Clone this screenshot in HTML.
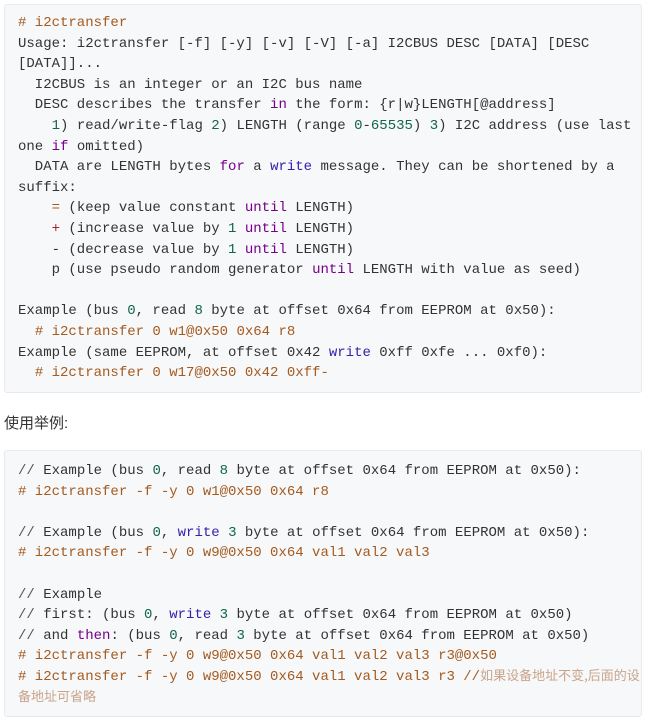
<!DOCTYPE html>
<html><head><meta charset="utf-8"><style>
html,body{margin:0;padding:0;background:#fff;width:648px;height:722px;overflow:hidden}
.blk{position:absolute;left:4px;width:638px;background:#f6f8fa;border:1px solid #e8eaed;border-radius:3px;box-sizing:border-box}
pre{margin:0;font-family:"Liberation Mono","Noto Sans CJK SC",monospace;font-size:14px;line-height:20.6px;color:#333;white-space:pre;padding-left:13px}
.c{color:#a55a1e}
.k{color:#770088}
.n{color:#116644}
.w{color:#3322aa}
.g{color:#555}
.z{color:#c9a48a;font-family:"Noto Sans CJK SC",sans-serif;font-size:13px;line-height:1;vertical-align:baseline}
.lbl{position:absolute;left:4px;top:412px;font-family:"Liberation Sans","Noto Sans CJK SC",sans-serif;font-size:15px;color:#333}
</style></head><body>
<div class="blk" style="top:4px;height:389px;padding-top:8px">
<pre><span class="c"># i2ctransfer</span>
Usage: i2ctransfer [-f] [-y] [-v] [-V] [-a] I2CBUS DESC [DATA] [DESC
[DATA]]...
  I2CBUS is an integer or an I2C bus name
  DESC describes the transfer <span class="k">in</span> the form: {r|w}LENGTH[@address]
    <span class="n">1</span>) read/write-flag <span class="n">2</span>) LENGTH (range <span class="n">0</span>-<span class="n">65535</span>) <span class="n">3</span>) I2C address (use last
one <span class="k">if</span> omitted)
  DATA are LENGTH bytes <span class="k">for</span> a <span class="w">write</span> message. They can be shortened by a
suffix:
    <span class="c">=</span> (keep value constant <span class="k">until</span> LENGTH)
    <span style="color:#aa2222">+</span> (increase value by <span class="n">1</span> <span class="k">until</span> LENGTH)
    - (decrease value by <span class="n">1</span> <span class="k">until</span> LENGTH)
    p (use pseudo random generator <span class="k">until</span> LENGTH with value as seed)

Example (bus <span class="n">0</span>, read <span class="n">8</span> byte at offset 0x64 from EEPROM at 0x50):
  <span class="c"># i2ctransfer 0 w1@0x50 0x64 r8</span>
Example (same EEPROM, at offset 0x42 <span class="w">write</span> 0xff 0xfe ... 0xf0):
  <span class="c"># i2ctransfer 0 w17@0x50 0x42 0xff-</span></pre>
</div>
<div class="lbl">使用举例:</div>
<div class="blk" style="top:450px;height:267px;padding-top:10px">
<pre><span class="g">//</span> Example (bus <span class="n">0</span>, read <span class="n">8</span> byte at offset 0x64 from EEPROM at 0x50):
<span class="c"># i2ctransfer -f -y 0 w1@0x50 0x64 r8</span>

<span class="g">//</span> Example (bus <span class="n">0</span>, <span class="w">write</span> <span class="n">3</span> byte at offset 0x64 from EEPROM at 0x50):
<span class="c"># i2ctransfer -f -y 0 w9@0x50 0x64 val1 val2 val3</span>

<span class="g">//</span> Example
<span class="g">//</span> first: (bus <span class="n">0</span>, <span class="w">write</span> <span class="n">3</span> byte at offset 0x64 from EEPROM at 0x50)
<span class="g">//</span> and <span class="k">then</span>: (bus <span class="n">0</span>, read <span class="n">3</span> byte at offset 0x64 from EEPROM at 0x50)
<span class="c"># i2ctransfer -f -y 0 w9@0x50 0x64 val1 val2 val3 r3@0x50</span>
<span class="c"># i2ctransfer -f -y 0 w9@0x50 0x64 val1 val2 val3 r3 //</span><span class="z">如果设备地址不变,后面的设</span>
<span class="z">备地址可省略</span></pre>
</div>
</body></html>
